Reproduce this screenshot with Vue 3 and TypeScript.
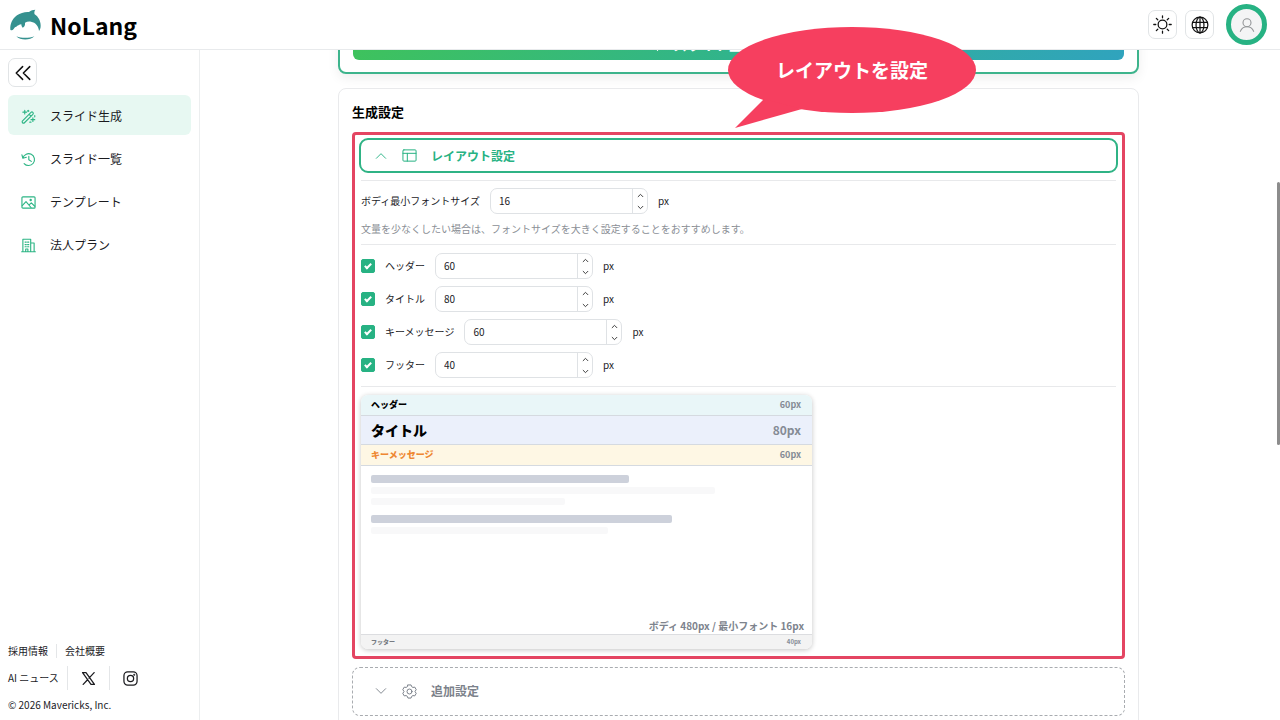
<script setup lang="ts">
import { reactive, ref } from 'vue'

interface Field {
  id: string
  label: string
  value: number
  enabled: boolean
}

interface NavItem {
  label: string
  icon: 'wand' | 'history' | 'image' | 'building'
  active: boolean
}

const navItems: NavItem[] = [
  { label: 'スライド生成', icon: 'wand', active: true },
  { label: 'スライド一覧', icon: 'history', active: false },
  { label: 'テンプレート', icon: 'image', active: false },
  { label: '法人プラン', icon: 'building', active: false },
]

const bodyFont = ref(16)

const fields = reactive<Field[]>([
  { id: 'header', label: 'ヘッダー', value: 60, enabled: true },
  { id: 'title', label: 'タイトル', value: 80, enabled: true },
  { id: 'key', label: 'キーメッセージ', value: 60, enabled: true },
  { id: 'footer', label: 'フッター', value: 40, enabled: true },
])

const textLines = [
  { width: 60, strong: true },
  { width: 80, strong: false },
  { width: 45, strong: false },
  { width: 70, strong: true },
  { width: 55, strong: false },
]
</script>

<template>
  <div class="app">
    <header class="topbar">
      <a class="brand" href="#">
        <svg class="brand-mark" viewBox="0 0 96 96" aria-hidden="true">
          <path
            d="M4 62C3 46 9 30 24 19C34 12 47 8 60 9C66 4 72 2 79 2C76 6 75 11 77 16C88 23 95 36 95 50C95 57 93 62 90 66C89 52 80 40 66 38C59 37 53 38 48 41C49 48 46 54 41 56C38 53 37 49 37 46C31 47 26 50 22 53C18 54 16 56 14 60C11 64 7 65 4 62Z"
            fill="#35918f"
          />
          <path d="M22 82C37 88 60 88 76 82C63 95 34 95 22 82Z" fill="#35918f" />
        </svg>
        <span>NoLang</span>
      </a>
      <div class="top-actions">
        <button class="square" type="button" aria-label="テーマ">
          <svg viewBox="0 0 24 24" class="ic19">
            <circle cx="12" cy="12" r="5.500" />
            <path d="M12 1v2.500M12 20.500V23M1 12h2.500M20.500 12H23M4.200 4.200L6 6M18 18l1.800 1.800M4.200 19.800L6 18M18 6l1.800-1.800" />
          </svg>
        </button>
        <button class="square" type="button" aria-label="言語">
          <svg viewBox="0 0 24 24" class="ic18">
            <circle cx="12" cy="12" r="10.500" />
            <ellipse cx="12" cy="12" rx="5.300" ry="10.500" />
            <path d="M2.500 8.500h19M2.500 15.500h19M12 1.500v21" />
          </svg>
        </button>
        <button class="avatar" type="button" aria-label="アカウント">
          <svg viewBox="0 0 24 24" class="ic16">
            <circle cx="12" cy="8.500" r="6" />
            <path d="M2 21.500c1.500-4 4.500-7 10-7s8.500 3 10 7" />
          </svg>
        </button>
      </div>
    </header>

    <div class="shell">
      <aside class="sidebar">
        <button class="square collapse" type="button" aria-label="閉じる">
          <svg viewBox="0 0 24 24" class="ic18"><path d="M11.500 3.500L3 12l8.500 8.500M21 3.500L12.500 12l8.500 8.500" /></svg>
        </button>
        <nav class="nav">
          <a v-for="item in navItems" :key="item.label" href="#" :class="['nav-item', { active: item.active }]">
            <svg v-if="item.icon === 'wand'" viewBox="0 0 24 24" class="ic15">
              <path d="M2.500 19L16 5.500a2.100 2.100 0 0 1 3 3L5.500 22a2.100 2.100 0 0 1-3-3zM13 8.500l3 3" />
              <path d="M6 2v6M3 5h6M19 14v6M16 17h6M11.500 2v2M10.500 3h2M14 21h2M22 10.500v2" />
            </svg>
            <svg v-else-if="item.icon === 'history'" viewBox="0 0 24 24" class="ic15">
              <path d="M3 9.500A9.500 9.500 0 1 1 5 18.500M1.500 4.500L3 10l5.500-1.500M12.500 7v5.500l4 2.500" />
            </svg>
            <svg v-else-if="item.icon === 'image'" viewBox="0 0 24 24" class="ic15">
              <rect x="1.500" y="3" width="21" height="18" rx="1.500" />
              <path d="M2 17l6-6.500 8 9.500M13.500 15.500l3-3 5.500 5.500" />
              <circle cx="15.500" cy="8" r="1" />
            </svg>
            <svg v-else viewBox="0 0 24 24" class="ic15">
              <path d="M1 22h22M3 22V2h12.500v20M15.500 8H21v14M7.500 22v-4.500H11V22M6.500 6.500h2M10.500 6.500h2M6.500 10.500h2M10.500 10.500h2M6.500 14h2M10.500 14h2" />
            </svg>
            <span>{{ item.label }}</span>
          </a>
        </nav>
        <footer class="side-foot">
          <div class="foot-row">
            <a href="#">採用情報</a>
            <i class="bar short"></i>
            <a href="#">会社概要</a>
          </div>
          <div class="foot-row social">
            <a href="#">AI ニュース</a>
            <i class="bar"></i>
            <a href="#" class="social-link" aria-label="X">
              <svg viewBox="0 0 24 24" class="ic15 dark">
                <path d="M2.500 2.500h5.500l13.500 19H16zM21 2.500l-8.200 9M10.500 14L3.500 21.500" />
              </svg>
            </a>
            <i class="bar"></i>
            <a href="#" class="social-link" aria-label="Instagram">
              <svg viewBox="0 0 24 24" class="ic15 dark">
                <rect x="1.500" y="1.500" width="21" height="21" rx="6" />
                <circle cx="12" cy="12" r="5" />
                <circle cx="18" cy="6" r="0.600" />
              </svg>
            </a>
          </div>
          <small>© 2026 Mavericks, Inc.</small>
        </footer>
      </aside>

      <main class="main">
        <div class="column">
          <section class="card generate-card">
            <button class="generate" type="button">
              <svg viewBox="0 0 24 24" class="ic15"><path d="M12 2l2.500 7.500L22 12l-7.500 2.500L12 22l-2.500-7.500L2 12l7.500-2.500z" /></svg>
              スライド生成を開始する
            </button>
          </section>

          <section class="card settings">
            <h2>生成設定</h2>
            <div class="frame">
              <button class="panel-head" type="button" aria-expanded="true">
                <svg viewBox="0 0 24 24" class="ic14"><path d="M4 16l8-8 8 8" /></svg>
                <svg viewBox="0 0 24 24" class="ic15">
                  <rect x="1.500" y="3" width="21" height="18" rx="1.500" />
                  <path d="M1.500 8.500h21M8.500 8.500V21" />
                </svg>
                レイアウト設定
              </button>
              <div class="panel-body">
                <div class="group base">
                  <div class="row">
                    <label for="body-font">ボディ最小フォントサイズ</label>
                    <span class="number">
                      <input id="body-font" v-model.number="bodyFont" type="text" inputmode="numeric" />
                      <span class="steps">
                        <button type="button" aria-label="増やす" @click="bodyFont++">
                          <svg viewBox="0 0 12 12"><path d="M2 8l4-4 4 4" /></svg>
                        </button>
                        <button type="button" aria-label="減らす" @click="bodyFont--">
                          <svg viewBox="0 0 12 12"><path d="M2 4l4 4 4-4" /></svg>
                        </button>
                      </span>
                    </span>
                    <span>px</span>
                  </div>
                  <p class="hint">文量を少なくしたい場合は、フォントサイズを大きく設定することをおすすめします。</p>
                </div>

                <div class="group fields">
                  <div v-for="f in fields" :key="f.id" class="row">
                    <label class="check"><input v-model="f.enabled" type="checkbox" />{{ f.label }}</label>
                    <span class="number">
                      <input v-model.number="f.value" type="text" inputmode="numeric" :aria-label="f.label" />
                      <span class="steps">
                        <button type="button" aria-label="増やす" @click="f.value++">
                          <svg viewBox="0 0 12 12"><path d="M2 8l4-4 4 4" /></svg>
                        </button>
                        <button type="button" aria-label="減らす" @click="f.value--">
                          <svg viewBox="0 0 12 12"><path d="M2 4l4 4 4-4" /></svg>
                        </button>
                      </span>
                    </span>
                    <span>px</span>
                  </div>
                </div>

                <div class="group">
                  <div class="preview">
                    <div class="band head"><b>{{ fields[0].label }}</b><span>{{ fields[0].value }}px</span></div>
                    <div class="band title"><b>{{ fields[1].label }}</b><span>{{ fields[1].value }}px</span></div>
                    <div class="band key"><b>{{ fields[2].label }}</b><span>{{ fields[2].value }}px</span></div>
                    <div class="slide-body">
                      <div class="lines">
                        <div
                          v-for="(line, i) in textLines"
                          :key="i"
                          :class="['line', { strong: line.strong }]"
                          :style="{ width: line.width + '%' }"
                        ></div>
                      </div>
                      <p class="body-note">ボディ 480px / 最小フォント {{ bodyFont }}px</p>
                    </div>
                    <div class="band foot"><b>{{ fields[3].label }}</b><span>{{ fields[3].value }}px</span></div>
                  </div>
                </div>
              </div>
            </div>

            <button class="extra" type="button" aria-expanded="false">
              <svg viewBox="0 0 24 24" class="ic14"><path d="M4 8l8 8 8-8" /></svg>
              <svg viewBox="0 0 24 24" class="ic15">
                <path d="M9.500 1.500h5l1 2.800 2 1.200 3-.5 2.300 4.200-1.900 2.300v1l1.900 2.300-2.300 4.200-3-.5-2 1.200-1 2.800h-5l-1-2.800-2-1.200-3 .5-2.300-4.200 1.900-2.300v-1L1.200 9.200 3.500 5l3 .5 2-1.200z" />
                <circle cx="12" cy="12" r="4" />
              </svg>
              追加設定
            </button>
          </section>
        </div>
        <div class="scroll-thumb"></div>
      </main>
    </div>

    <div class="bubble">
      <svg viewBox="0 0 248 102" aria-hidden="true">
        <ellipse cx="124" cy="43" rx="124" ry="43" />
        <path d="M36 72L7 101L74 82z" />
      </svg>
      <span>レイアウトを設定</span>
    </div>
  </div>
</template>

<style>
body {
  margin: 0;
  overflow: hidden;
}
</style>

<style scoped>
.app {
  position: relative;
  display: flex;
  flex-direction: column;
  height: 100vh;
  overflow: hidden;
  background: #fff;
  color: #1b1b1f;
  font-family: "Noto Sans CJK JP", "Noto Sans", sans-serif;
  font-size: 10px;
  line-height: 16px;
}
.app *,
.app *::before,
.app *::after {
  box-sizing: border-box;
}
button,
input {
  margin: 0;
  font: inherit;
  color: inherit;
}
button {
  cursor: pointer;
}
a {
  color: inherit;
  text-decoration: none;
}
svg {
  display: block;
  flex: none;
  fill: none;
  stroke: currentColor;
  stroke-width: 1.6;
  stroke-linecap: round;
  stroke-linejoin: round;
}
.ic14 { width: 14px; height: 14px; }
.ic15 { width: 15px; height: 15px; }
.ic16 { width: 16px; height: 16px; }
.ic18 { width: 18px; height: 18px; }
.ic19 { width: 19px; height: 19px; }
.dark { stroke-width: 2; }

.topbar {
  display: flex;
  align-items: center;
  justify-content: space-between;
  flex: none;
  height: 50px;
  padding: 0 13px 0 9px;
  border-bottom: 1px solid #e8eaec;
}
.brand {
  display: flex;
  align-items: center;
  gap: 9px;
  color: #000;
  font-size: 23px;
  font-weight: 700;
  line-height: 32px;
}
.brand-mark {
  width: 32px;
  height: 32px;
  stroke: none;
}
.top-actions {
  display: flex;
  align-items: center;
  gap: 8px;
}
.square {
  display: flex;
  align-items: center;
  justify-content: center;
  width: 29px;
  height: 29px;
  padding: 0;
  border: 1px solid #e1e4e6;
  border-radius: 7px;
  background: #fff;
  color: #111;
}
.collapse svg { stroke-width: 2; }
.avatar {
  display: flex;
  align-items: center;
  justify-content: center;
  width: 41px;
  height: 41px;
  margin-left: 4px;
  padding: 0;
  border: 5px solid #27b283;
  border-radius: 50%;
  background: #f4f4f5;
  color: #929496;
}

.shell {
  display: flex;
  flex: 1;
  min-height: 0;
}
.sidebar {
  display: flex;
  flex-direction: column;
  flex: none;
  width: 200px;
  padding: 8px 8px 7px;
  border-right: 1px solid #eceeef;
}
.nav {
  display: flex;
  flex-direction: column;
  gap: 3px;
  margin-top: 8px;
}
.nav-item {
  display: flex;
  align-items: center;
  gap: 14px;
  height: 40px;
  padding: 2px 13px 0;
  border-radius: 6px;
  font-size: 12px;
}
.nav-item svg {
  color: #2db585;
  stroke-width: 1.8;
}
.nav-item.active { background: #e7f8f2; }
.side-foot {
  display: flex;
  flex-direction: column;
  gap: 7px;
  margin-top: auto;
}
.foot-row {
  display: flex;
  align-items: center;
  gap: 8px;
}
.bar {
  width: 1px;
  height: 24px;
  background: #e4e6e8;
}
.bar.short { height: 14px; }
.social { height: 24px; }
.social-link { padding: 0 5px; }
.side-foot small {
  font-size: 10px;
}

.main {
  display: flex;
  flex: 1;
  min-width: 0;
  overflow: hidden;
}
.column {
  flex: 1;
  max-width: 801px;
  margin: 0 auto;
}
.card {
  border: 1px solid #e9eaec;
  border-radius: 8px;
  background: #fff;
}
.generate-card {
  margin-top: -36px;
  padding: 12px 13px;
  border: 2px solid #3db48c;
  box-shadow: 0 4px 12px rgba(0, 0, 0, 0.07);
}
.generate {
  display: flex;
  align-items: center;
  justify-content: center;
  gap: 8px;
  width: 100%;
  height: 32px;
  padding: 0;
  border: 0;
  border-radius: 6px;
  background: linear-gradient(135deg, #3fc35a, #31b48b 50%, #30a3be);
  color: #fff;
  font-size: 14px;
  font-weight: 700;
}
.settings {
  margin-top: 14px;
  padding: 13px 13px 20px;
}
h2 {
  margin: 0;
  color: #000;
  font-size: 13px;
  font-weight: 700;
  line-height: 20px;
}
.frame {
  margin-top: 10px;
  padding: 3px 4px 1px;
  border: 3px solid #e44562;
  border-radius: 4px;
}
.panel-head,
.extra {
  display: flex;
  align-items: center;
  width: 100%;
  gap: 14px;
  text-align: left;
  font-size: 12px;
  font-weight: 700;
}
.panel-head {
  height: 35px;
  padding: 0 13px;
  border: 2px solid #2fb385;
  border-radius: 9px;
  background: #fff;
  color: #27b283;
}
.panel-body {
  margin-top: 7px;
  padding: 0 2px;
}
.group {
  padding: 8px 0 6px;
  border-top: 1px solid #e8e9eb;
}
.base { padding: 7px 0; }
.row {
  display: flex;
  align-items: center;
  gap: 10px;
}
.number {
  display: flex;
  width: 158px;
  height: 26px;
  overflow: hidden;
  border: 1px solid #dfe2e5;
  border-radius: 7px;
  background: #fff;
}
.number input {
  flex: 1;
  min-width: 0;
  padding: 0 8px;
  border: 0;
  outline: 0;
  background: transparent;
}
.steps {
  display: flex;
  flex-direction: column;
  width: 15px;
  border-left: 1px solid #dfe2e5;
}
.steps button {
  display: flex;
  flex: 1;
  align-items: center;
  justify-content: center;
  padding: 0;
  border: 0;
  background: none;
  color: #333;
}
.steps svg {
  width: 7px;
  height: 7px;
}
.hint {
  margin: 7px 0 0;
  color: #8b8f96;
}
.fields {
  display: flex;
  flex-direction: column;
  gap: 7px;
  padding-bottom: 8px;
}
.check {
  display: flex;
  align-items: center;
  gap: 10px;
}
.check input {
  position: relative;
  width: 14px;
  height: 14px;
  appearance: none;
  border-radius: 2px;
  border: 1px solid #27b283;
}
.check input:checked { background: #27b283; }
.check input:checked::after {
  content: "";
  position: absolute;
  left: 4px;
  top: 2px;
  width: 4px;
  height: 7px;
  border: solid #fff;
  border-width: 0 2px 2px 0;
  rotate: 45deg;
}

.preview {
  display: flex;
  flex-direction: column;
  max-width: 451px;
  aspect-ratio: 16 / 9;
  overflow: hidden;
  border-radius: 7px;
  background: #fff;
  box-shadow: 0 1px 5px rgba(0, 0, 0, 0.24);
}
.band {
  display: flex;
  flex: none;
  align-items: center;
  justify-content: space-between;
  height: 21px;
  padding: 0 11px 0 10px;
  border-bottom: 1px solid #d5dae0;
  font-size: 9px;
  font-weight: 700;
}
.band b { color: #000; }
.band span { color: #858b95; }
.head { background: #e9f6f8; }
.title {
  height: 29px;
  background: #ebf0fb;
  font-size: 14px;
}
.title span { font-size: 12px; }
.key { background: #fef7e4; }
.key b { color: #ee8732; }
.foot {
  height: 15px;
  border-top: 1px solid #dcdde0;
  border-bottom: 0;
  background: #f3f3f3;
  font-size: 6px;
}
.foot b { color: #777b82; }
.slide-body {
  display: flex;
  flex: 1;
  flex-direction: column;
  justify-content: space-between;
  min-height: 0;
  padding: 9px 8px 0 10px;
}
.lines {
  display: flex;
  flex-direction: column;
  gap: 4px;
  padding-right: 3px;
}
.line {
  height: 7px;
  border-radius: 2px;
  background: #f8f8f9;
}
.line.strong {
  height: 8px;
  background: #cdd1db;
}
.line:not(.strong) + .line.strong { margin-top: 6px; }
.body-note {
  margin: 0;
  color: #7d838d;
  font-weight: 700;
  text-align: right;
}
.extra {
  height: 49px;
  margin-top: 8px;
  padding: 0 21px;
  border: 1px dashed #a9acb0;
  border-radius: 8px;
  background: #fff;
  color: #7c828b;
}
.scroll-thumb {
  flex: none;
  width: 3px;
  height: 263px;
  margin-top: 132px;
  border-radius: 2px;
  background: #8c8c8c;
}

.bubble {
  position: absolute;
  top: 27px;
  left: 728px;
  width: 248px;
  color: #fff;
  font-size: 19px;
  font-weight: 700;
  text-align: center;
}
.bubble svg {
  width: 248px;
  height: 102px;
  fill: #f63f5f;
  stroke: none;
}
.bubble span {
  position: absolute;
  top: 0;
  right: 0;
  left: 0;
  line-height: 86px;
}
</style>
